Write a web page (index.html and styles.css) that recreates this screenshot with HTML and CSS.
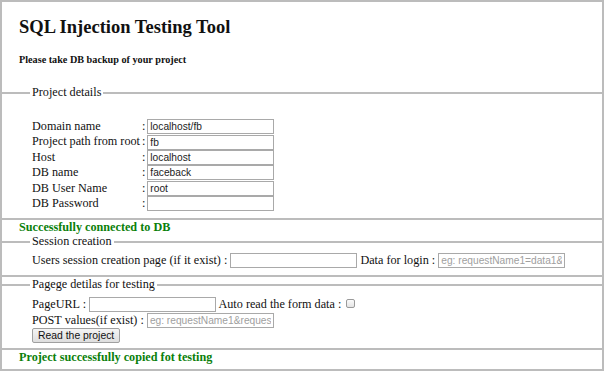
FILE: index.html
```html
<!DOCTYPE html>
<html lang="en">
<head>
    <meta charset="UTF-8">
    <title>SQL Injection Testing Tool</title>
    <link rel="stylesheet" href="styles.css">
</head>
<body>
    <div class="page">
        <h2 class="title">SQL Injection Testing Tool</h2>
        <h5 class="note">Please take DB backup of your project</h5>

        <fieldset class="group group-project">
            <legend>Project details</legend>
            <table class="details">
                <tr><td class="label">Domain name</td><td class="colon">:</td><td><input type="text" value="localhost/fb"></td></tr>
                <tr><td class="label">Project path from root</td><td class="colon">:</td><td><input type="text" value="fb"></td></tr>
                <tr><td class="label">Host</td><td class="colon">:</td><td><input type="text" value="localhost"></td></tr>
                <tr><td class="label">DB name</td><td class="colon">:</td><td><input type="text" value="faceback"></td></tr>
                <tr><td class="label">DB User Name</td><td class="colon">:</td><td><input type="text" value="root"></td></tr>
                <tr><td class="label">DB Password</td><td class="colon">:</td><td><input type="password"></td></tr>
            </table>
        </fieldset>

        <h4 class="status">Successfully connected to DB</h4>

        <fieldset class="group group-session">
            <legend>Session creation</legend>
            <div class="row">
                Users session creation page (if it exist) : <input type="text">
                Data for login : <input type="text" placeholder="eg: requestName1=data1&amp;">
            </div>
        </fieldset>

        <fieldset class="group group-pages">
            <legend>Pagege detilas for testing</legend>
            <div class="row">
                PageURL : <input type="text">
                Auto read the form data : <input type="checkbox" class="check">
            </div>
            <div class="row">
                POST values(if exist) : <input type="text" placeholder="eg: requestName1&amp;requestName2">
            </div>
            <div class="row row-button">
                <button type="button">Read the project</button>
            </div>
        </fieldset>

        <h4 class="status">Project successfully copied fot testing</h4>
    </div>
</body>
</html>
```

FILE: styles.css
```css
:root {
    --frame: #bcbcbc;
    --input-border: #a9a9a9;
    --ok: #0a800a;
    --text: #111111;
}

body {
    margin: 0;
    font-family: "Liberation Serif", "Times New Roman", serif;
    font-size: 12.2px;
    color: var(--text);
}

.page {
    height: 371px;
    box-sizing: border-box;
    border: 2px solid var(--frame);
    overflow: hidden;
}

.title {
    margin: 14px 0 0 17px;
    font-size: 18.5px;
    line-height: 22px;
}

.note {
    margin: 16px 0 0 17px;
    font-size: 10.2px;
    line-height: 12px;
}

.group {
    margin: 0;
    padding: 0 0 0 30px;
    border: 2px solid var(--frame);
    border-left: none;
    border-right: none;
    min-width: 0;
}

.group legend {
    padding: 0 2px;
    margin-left: -2px;
    line-height: 15px;
}

.group-project {
    margin-top: 19px;
    padding-top: 19px;
    padding-bottom: 7px;
}

.group-session {
    padding-top: 4px;
    padding-bottom: 6.5px;
}

.group-session input {
    margin-left: 2px;
}

.group-pages {
    padding-top: 5px;
    padding-bottom: 4.5px;
}

.details {
    border-spacing: 0;
}

.details td {
    padding: 0;
    line-height: 15.4px;
}

.details .label {
    padding-right: 2px;
}

.details .colon {
    padding-right: 2px;
}

.row {
    line-height: 15.5px;
}

.row-button {
    line-height: 15px;
}

input[type="text"],
input[type="password"] {
    width: 127px;
    height: 15px;
    box-sizing: border-box;
    margin: 0;
    padding: 0 2px;
    border: 1px solid var(--input-border);
    font-family: "Liberation Sans", Arial, sans-serif;
    font-size: 10.2px;
    color: #222;
    vertical-align: top;
}

.details input {
    display: block;
}

input::placeholder {
    color: #a0a0a0;
}

.check {
    appearance: none;
    width: 9px;
    height: 9px;
    margin: 2px 0 0 2px;
    border: 1px solid #9a9a9a;
    border-radius: 2px;
    background: linear-gradient(#fbfbfb, #e4e4e4);
    vertical-align: top;
}

button {
    height: 15px;
    margin: 0;
    padding: 0 5px;
    border: 1px solid #a0a0a0;
    border-radius: 2px;
    background: linear-gradient(#f4f4f4, #dedede);
    font-family: "Liberation Sans", Arial, sans-serif;
    font-size: 10.4px;
    color: #111;
    vertical-align: top;
}

.status {
    margin: 0 0 0 17px;
    color: var(--ok);
    font-size: 12.2px;
    line-height: 14px;
}
```
